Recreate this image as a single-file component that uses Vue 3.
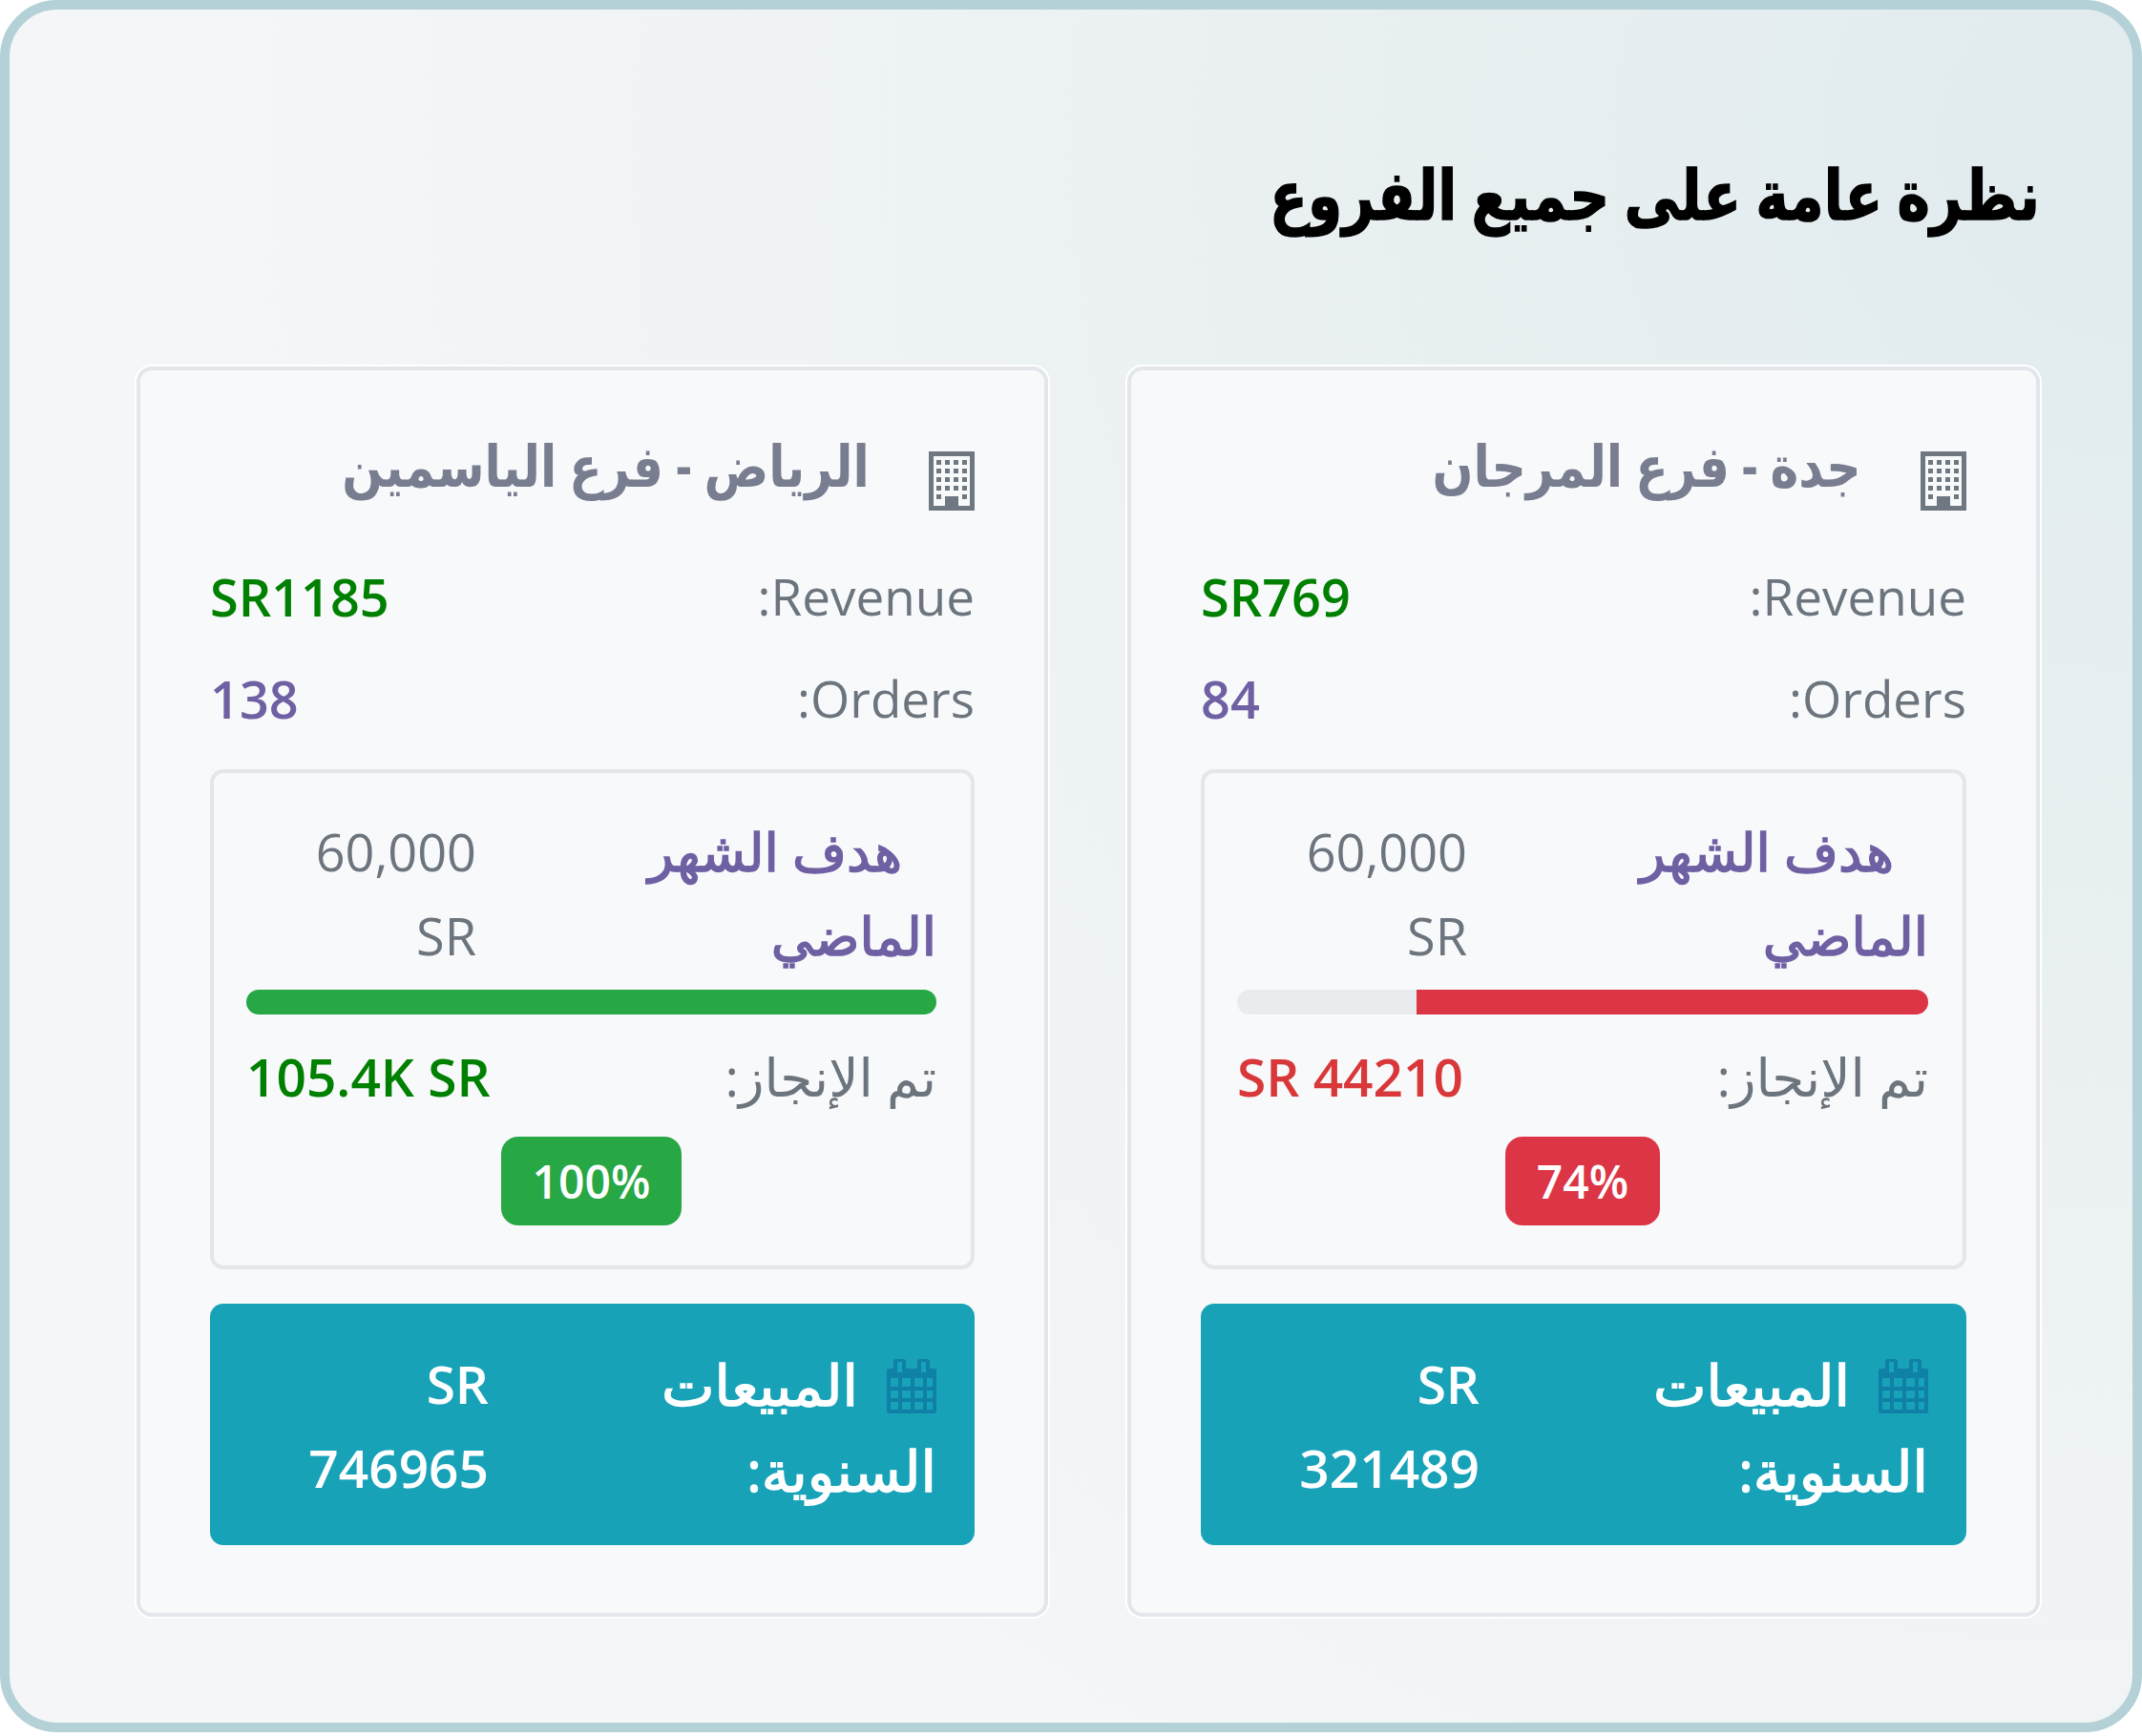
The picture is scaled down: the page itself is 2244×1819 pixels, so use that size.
<script setup>
const branches = [
  { id: 1, name: 'جدة - فرع المرجان', revenue: 'SR769', orders: '84', done: 'SR 44210', percent: 74, yearly: '321489', status: 'low' },
  { id: 2, name: 'الرياض - فرع الياسمين', revenue: 'SR1185', orders: '138', done: '105.4K SR', percent: 100, yearly: '746965', status: 'ok' }
]
</script>

<template>
  <div class="frame" dir="rtl">
    <h1 class="title">نظرة عامة على جميع الفروع</h1>
    <div class="cards">
      <section v-for="b in branches" :key="b.id" class="card">
        <header class="card-head">
          <svg class="building" viewBox="0 0 48 62">
            <path fill="#6f7780" fill-rule="evenodd" d="M0 0h48v62H0zM5 5v52h12V47h14v10h12V5z" />
            <g fill="#6f7780">
              <template v-for="row in 4" :key="row">
                <rect v-for="col in 4" :key="col" :x="8 + (col - 1) * 9" :y="9 + (row - 1) * 9" width="5" height="5" />
              </template>
              <rect x="8" y="45" width="5" height="5" />
              <rect x="35" y="45" width="5" height="5" />
            </g>
          </svg>
          <h2>{{ b.name }}</h2>
        </header>

        <div class="stat">
          <span class="muted">Revenue:</span>
          <b class="green">{{ b.revenue }}</b>
        </div>
        <div class="stat">
          <span class="muted">Orders:</span>
          <b class="purple">{{ b.orders }}</b>
        </div>

        <div class="goal">
          <div class="goal-row">
            <span class="goal-label">هدف الشهر الماضي</span>
            <span class="goal-value muted">60,000 SR</span>
          </div>
          <div class="bar">
            <div class="bar-fill" :class="b.status" :style="{ width: b.percent + '%' }"></div>
          </div>
          <div class="done-row">
            <span class="done-label">تم الإنجاز:</span>
            <b :class="b.status === 'ok' ? 'green' : 'red'">{{ b.done }}</b>
          </div>
          <div class="badge-wrap">
            <span class="badge" :class="b.status">{{ b.percent }}%</span>
          </div>
        </div>

        <div class="yearly">
          <span class="yearly-label">
            <svg class="calendar" viewBox="0 0 52 57">
              <path fill="#0f80a6" fill-rule="evenodd" d="M10 0h7a3 3 0 0 1 3 3v7h12V3a3 3 0 0 1 3-3h7a3 3 0 0 1 3 3v7h5a2 2 0 0 1 2 2v43a2 2 0 0 1-2 2H2a2 2 0 0 1-2-2V12a2 2 0 0 1 2-2h5V3a3 3 0 0 1 3-3zm1 3v11h5V3zm25 0v11h5V3zM4 20v9h8v-9zm12 0v9h9v-9zm13 0v9h9v-9zm13 0v9h6v-9zM4 33v8h8v-8zm12 0v8h9v-8zm13 0v8h9v-8zm13 0v8h6v-8zM4 45v8h8v-8zm12 0v8h9v-8zm13 0v8h9v-8zm13 0v8h6v-8z" />
            </svg>
            <span class="yearly-text">المبيعات السنوية:</span>
          </span>
          <span class="yearly-value">SR {{ b.yearly }}</span>
        </div>
      </section>
    </div>
  </div>
</template>

<style>
html, body {
  background: #fff;
}
</style>

<style scoped>
.frame {
  box-sizing: border-box;
  width: 2244px;
  height: 1815px;
  padding: 150px 97px 0 133px;
  border: 10px solid #b3d1d7;
  border-radius: 60px;
  background: radial-gradient(circle at 100% 8%, #e0ebee 0, #e8eff1 26%, #eff3f4 50%, #f4f6f7 72%);
  font-family: "Open Sans", "Noto Sans", "DejaVu Sans", sans-serif;
  color: #6c757d;
}

.title {
  margin: 0;
  height: 84px;
  font-size: 72px;
  line-height: 84px;
  font-weight: 700;
  color: #000;
  -webkit-text-stroke: 1.5px #000;
  transform: scaleX(0.81);
  transform-origin: right center;
  white-space: nowrap;
}

.cards {
  display: grid;
  grid-template-columns: 956px 955px;
  gap: 83px;
  margin-top: 140px;
}

.card {
  box-sizing: border-box;
  height: 1310px;
  padding: 64px 73px 0;
  border: 4px solid #e3e6ea;
  border-radius: 16px;
  background: #f8f9fb;
  box-shadow: 0 0 0 2px #fff;
}

.card-head {
  display: flex;
  align-items: flex-start;
  gap: 62px;
  height: 70px;
}

.card-head h2 {
  margin: 0;
  font-size: 60px;
  line-height: 70px;
  font-weight: 700;
  color: #787d90;
  white-space: nowrap;
  transform: scaleX(0.84);
  transform-origin: right center;
}

.building {
  width: 48px;
  height: 62px;
  flex: none;
  margin-top: 21px;
}

.stat {
  display: flex;
  justify-content: space-between;
  align-items: center;
  height: 107px;
  font-size: 53px;
}

.stat:first-of-type {
  margin-top: 49px;
}

.stat b {
  font-size: 54px;
  font-weight: 600;
}

.green { color: #008000; }
.purple { color: #6f60a3; }
.red { color: #d9383a; }

.goal {
  box-sizing: border-box;
  height: 524px;
  margin-top: 21px;
  padding: 38px 36px 0 34px;
  border: 4px solid #e3e6ea;
  border-radius: 14px;
}

.goal-row {
  display: flex;
  justify-content: space-between;
  font-size: 54px;
  line-height: 88px;
}

.goal-label {
  width: 420px;
  text-indent: 36px;
  font-size: 55px;
  color: #6f60a3;
  -webkit-text-stroke: 1.5px #6f60a3;
}

.goal-value {
  width: 176px;
  margin-left: 65px;
  text-align: right;
}

.bar {
  height: 26px;
  margin-top: 13px;
  border-radius: 13px;
  background: #e9ecef;
  overflow: hidden;
}

.bar-fill {
  height: 100%;
}

.bar-fill.low,
.badge.low { background: #dc3545; }
.bar-fill.ok,
.badge.ok { background: #28a745; }

.done-row {
  display: flex;
  justify-content: space-between;
  margin-top: 21px;
  font-size: 55px;
  line-height: 88px;
}

.done-row b {
  font-weight: 600;
}

.badge-wrap {
  display: flex;
  justify-content: center;
  margin-top: 19px;
}

.badge {
  height: 93px;
  padding: 0 33px;
  border-radius: 18px;
  color: #fff;
  font-size: 48px;
  line-height: 93px;
  font-weight: 600;
}

.yearly {
  box-sizing: border-box;
  display: flex;
  justify-content: space-between;
  height: 253px;
  margin-top: 36px;
  padding: 40px 40px 0;
  border-radius: 14px;
  background: #17a2b8;
  color: #fff;
  font-size: 55px;
  line-height: 88px;
}

.yearly-label {
  width: 400px;
}

.yearly-text {
  font-size: 59px;
  -webkit-text-stroke: 1.5px #fff;
}

.yearly-value {
  width: 198px;
  margin-left: 54px;
  text-align: right;
  font-weight: 600;
}

.calendar {
  width: 52px;
  height: 57px;
  margin-left: 30px;
  vertical-align: -8px;
}
</style>
